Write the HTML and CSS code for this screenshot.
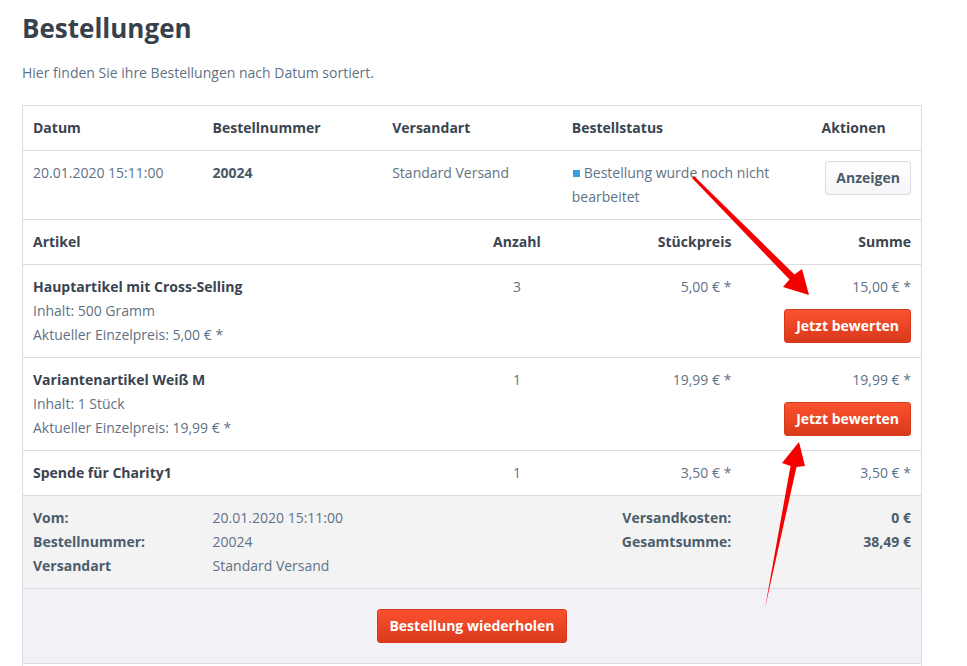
FILE: index.html
```html
<!DOCTYPE html>
<html lang="de">
<head>
<meta charset="utf-8">
<title>Bestellungen</title>
<link rel="stylesheet" href="styles.css">
</head>
<body>
<main class="page">
  <h1 class="page-title">Bestellungen</h1>
  <p class="intro">Hier finden Sie ihre Bestellungen nach Datum sortiert.</p>

  <section class="order-panel">
    <div class="row order-row order-head">
      <div class="cell">Datum</div>
      <div class="cell">Bestellnummer</div>
      <div class="cell">Versandart</div>
      <div class="cell">Bestellstatus</div>
      <div class="cell cell-center">Aktionen</div>
    </div>
    <div class="row order-row order-info">
      <div class="cell">20.01.2020 15:11:00</div>
      <div class="cell strong">20024</div>
      <div class="cell">Standard Versand</div>
      <div class="cell"><span class="status-dot"></span>Bestellung wurde noch nicht bearbeitet</div>
      <div class="cell cell-right"><button class="btn btn-secondary">Anzeigen</button></div>
    </div>

    <div class="row items items-head">
      <div class="cell">Artikel</div>
      <div class="cell cell-center">Anzahl</div>
      <div class="cell cell-right">Stückpreis</div>
      <div class="cell cell-right">Summe</div>
    </div>
    <div class="row items">
      <div class="cell">
        <div class="item-name">Hauptartikel mit Cross-Selling</div>
        <div>Inhalt: 500 Gramm</div>
        <div>Aktueller Einzelpreis: 5,00 € *</div>
      </div>
      <div class="cell cell-center">3</div>
      <div class="cell cell-right">5,00 € *</div>
      <div class="cell cell-right">
        <div>15,00 € *</div>
        <button class="btn btn-primary btn-rate">Jetzt bewerten</button>
      </div>
    </div>
    <div class="row items">
      <div class="cell">
        <div class="item-name">Variantenartikel Weiß M</div>
        <div>Inhalt: 1 Stück</div>
        <div>Aktueller Einzelpreis: 19,99 € *</div>
      </div>
      <div class="cell cell-center">1</div>
      <div class="cell cell-right">19,99 € *</div>
      <div class="cell cell-right">
        <div>19,99 € *</div>
        <button class="btn btn-primary btn-rate">Jetzt bewerten</button>
      </div>
    </div>
    <div class="row items">
      <div class="cell"><div class="item-name">Spende für Charity1</div></div>
      <div class="cell cell-center">1</div>
      <div class="cell cell-right">3,50 € *</div>
      <div class="cell cell-right">3,50 € *</div>
    </div>

    <div class="summary">
      <div class="sum-label">Vom:</div>
      <div class="sum-value">20.01.2020 15:11:00</div>
      <div></div>
      <div class="sum-label cell-right">Versandkosten:</div>
      <div class="sum-label cell-right">0 €</div>

      <div class="sum-label">Bestellnummer:</div>
      <div class="sum-value">20024</div>
      <div></div>
      <div class="sum-label cell-right">Gesamtsumme:</div>
      <div class="sum-label cell-right">38,49 €</div>

      <div class="sum-label">Versandart</div>
      <div class="sum-value">Standard Versand</div>
    </div>

    <div class="panel-actions">
      <button class="btn btn-primary">Bestellung wiederholen</button>
    </div>
    <div class="panel-next"></div>
  </section>
</main>

<!-- red pointer arrows drawn over the order panel -->
<svg class="arrows" width="967" height="666" viewBox="0 0 967 666" aria-hidden="true">
  <polygon class="arrow" points="692,178 694,176 794.5,274.5 802,269 809,295 783,287 789.5,279.5"/>
  <polygon class="arrow" points="765,608 796.5,467 805,466 799,442 782,463 790.5,466"/>
</svg>
</body>
</html>
```

FILE: styles.css
```css
* {
  box-sizing: border-box;
}

html, body {
  margin: 0;
  padding: 0;
  background: #fff;
}

body {
  font-family: "Open Sans", "Noto Sans", sans-serif;
  font-size: 14px;
  line-height: 24px;
  color: #5f7285;
  position: relative;
  width: 967px;
  height: 666px;
  overflow: hidden;
}

.page {
  padding: 10px 45px 0 22px;
}

.page-title {
  margin: 0;
  font-size: 26px;
  line-height: 36px;
  font-weight: 700;
  color: #37414c;
}

.intro {
  margin: 15px 0 20px 0;
}

.order-panel {
  border: 1px solid #dadae5;
  width: 900px;
}

.row {
  display: grid;
  border-bottom: 1px solid #dadae5;
}

.order-row {
  grid-template-columns: 20% 20% 20% 25% 15%;
}

.cell {
  padding: 10px;
}

.order-head,
.items-head {
  font-weight: 700;
  color: #3a4450;
}

.strong {
  font-weight: 700;
  color: #4a5866;
}

.cell-right {
  text-align: right;
}

.cell-center {
  text-align: center;
}

.status-dot {
  display: inline-block;
  width: 7px;
  height: 7px;
  background: #3b9fde;
  margin: 0 4px 1px 1px;
}

.items {
  grid-template-columns: 45% 20% 15% 20%;
}

.item-name {
  font-weight: 700;
  color: #3a4450;
}

.btn {
  font-family: inherit;
  font-size: 14px;
  font-weight: 700;
  height: 34px;
  line-height: 32px;
  border-radius: 3px;
  padding: 0 11px;
  cursor: pointer;
}

.btn-secondary {
  background: linear-gradient(#ffffff, #f6f6f8);
  border: 1px solid #dadae5;
  color: #4c5b6a;
  padding: 0 10px;
}

.btn-primary {
  background: linear-gradient(#fb522f, #d9391b);
  border: 1px solid #d9391b;
  color: #fff;
}

.btn-rate {
  margin-top: 10px;
}

.summary {
  display: grid;
  grid-template-columns: 20% 25% 20% 15% 20%;
  padding: 10px 0;
  background: #f3f3f4;
  border-bottom: 1px solid #dadae5;
}

.summary > div {
  padding: 0 10px;
}

.sum-label {
  font-weight: 700;
  color: #4b5d6d;
}

.panel-actions {
  display: flex;
  justify-content: center;
  padding: 20px 0;
  background: #f2f2f6;
  border-bottom: 1px solid #dadae5;
}

/* the panel carries on past the visible area */
.panel-next {
  height: 24px;
}

.arrows {
  position: absolute;
  top: 0;
  left: 0;
  pointer-events: none;
}

.arrow {
  fill: #f40000;
}
```
